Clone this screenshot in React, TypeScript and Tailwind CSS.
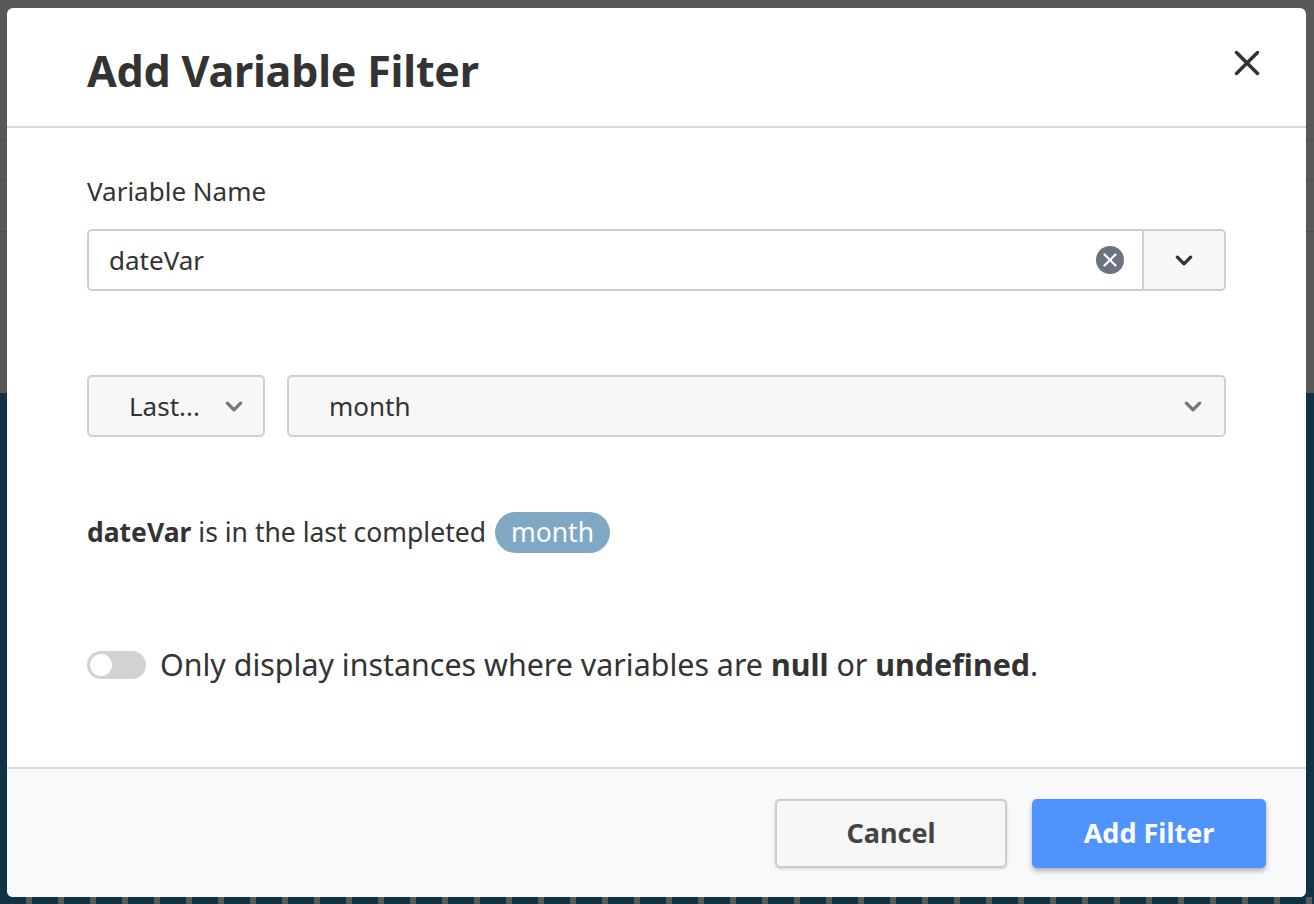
import { X } from "lucide-react";

function Chevron({ className }: { className?: string }) {
  return (
    <svg viewBox="0 0 16 10" className={className} fill="none" stroke="currentColor" strokeWidth="3" strokeLinecap="round" strokeLinejoin="round">
      <path d="M2 2l6 6 6-6" />
    </svg>
  );
}

function ClearIcon() {
  return (
    <svg viewBox="0 0 28 28" className="w-[28px] h-[28px]">
      <circle cx="14" cy="14" r="14" fill="#6b7380" />
      <path d="M8.5 8.5l11 11M19.5 8.5l-11 11" stroke="#fff" strokeWidth="2.2" strokeLinecap="round" />
    </svg>
  );
}

export default function App() {
  return (
    <div className="relative w-[1314px] h-[904px] overflow-hidden font-['Noto_Sans',sans-serif] text-[#333]">
      {/* dimmed page behind */}
      <div className="flex flex-col h-full">
        <div className="h-[393px] bg-[#585858] flex flex-col">
          <div className="h-[140px] border-b border-[#4d4d4d]" />
          <div className="h-[40px] border-b border-[#4d4d4d]" />
          <div className="h-[52px] border-b border-[#4d4d4d]" />
        </div>
        <div className="flex-1 bg-[#0f3344]" />
        <div className="h-[7px] bg-[repeating-linear-gradient(90deg,#0f3344_0px,#0f3344_26px,#5a5a5a_26px,#5a5a5a_32px)]" />
      </div>

      {/* modal */}
      <div className="absolute left-[7px] top-[8px] w-[1299px] h-[889px] bg-white rounded-[6px] flex flex-col overflow-hidden">
        <div className="h-[120px] shrink-0 border-b-2 border-[#d8d8d8] flex items-center justify-between pl-[80px] pr-[38px]">
          <h1 className="text-[43px] font-bold text-[#333] tracking-[-0.2px] mt-[8px]">Add Variable Filter</h1>
          <button className="text-[#333] mt-[-8px]">
            <X className="w-[42px] h-[42px]" strokeWidth={2} />
          </button>
        </div>

        <div className="flex-1 px-[80px] flex flex-col">
          <div className="h-[32px] mt-[47px] flex items-center text-[26px]">Variable Name</div>

          <div className="mt-[22px] h-[62px] flex">
            <div className="flex-1 flex items-center border-2 border-[#cfcfcf] rounded-l-[5px] pl-[20px] pr-[18px]">
              <span className="flex-1 text-[26px]">dateVar</span>
              <ClearIcon />
            </div>
            <div className="w-[82px] flex items-center justify-center bg-[#f7f7f7] border-2 border-l-0 border-[#cfcfcf] rounded-r-[5px] text-[#333]">
              <Chevron className="w-[18px] h-[11px]" />
            </div>
          </div>

          <div className="mt-[84px] h-[62px] flex gap-[22px]">
            <div className="w-[178px] flex items-center bg-[#f7f7f7] border-2 border-[#d0d0d0] rounded-[5px] pl-[40px] pr-[20px]">
              <span className="flex-1 text-[26px]">Last...</span>
              <Chevron className="w-[18px] h-[11px] text-[#777]" />
            </div>
            <div className="flex-1 flex items-center bg-[#f7f7f7] border-2 border-[#d0d0d0] rounded-[5px] pl-[40px] pr-[22px]">
              <span className="flex-1 text-[26px]">month</span>
              <Chevron className="w-[18px] h-[11px] text-[#777]" />
            </div>
          </div>

          <div className="mt-[75px] h-[41px] flex items-center text-[26.5px]">
            <span className="font-bold">dateVar</span>
            <span className="ml-[7px]">is in the last completed</span>
            <span className="ml-[9px] h-[41px] px-[16px] rounded-full bg-[#80a8c5] text-white flex items-center">month</span>
          </div>

          <div className="mt-[92px] h-[40px] flex items-center gap-[14px] text-[30.4px]">
            <div className="w-[59px] h-[28px] shrink-0 rounded-full bg-[#d2d2d2] flex items-center pl-[3px]">
              <div className="w-[22px] h-[22px] rounded-full bg-white" />
            </div>
            <span>
              Only display instances where variables are <b>null</b> or <b>undefined</b>.
            </span>
          </div>
        </div>

        <div className="h-[130px] shrink-0 border-t-2 border-[#dcdcdc] bg-[#f8f9fb] flex items-center justify-end gap-[25px] pr-[40px]">
          <button className="w-[232px] h-[69px] rounded-[5px] bg-[#f7f7f7] border-2 border-[#cccccc] shadow-[0_1px_3px_rgba(0,0,0,0.15)] text-[27px] font-bold text-[#444]">
            Cancel
          </button>
          <button className="w-[234px] h-[69px] rounded-[5px] bg-[#4f93fc] shadow-[0_3px_5px_rgba(0,0,0,0.3)] text-[27px] font-bold text-white">
            Add Filter
          </button>
        </div>
      </div>
    </div>
  );
}
